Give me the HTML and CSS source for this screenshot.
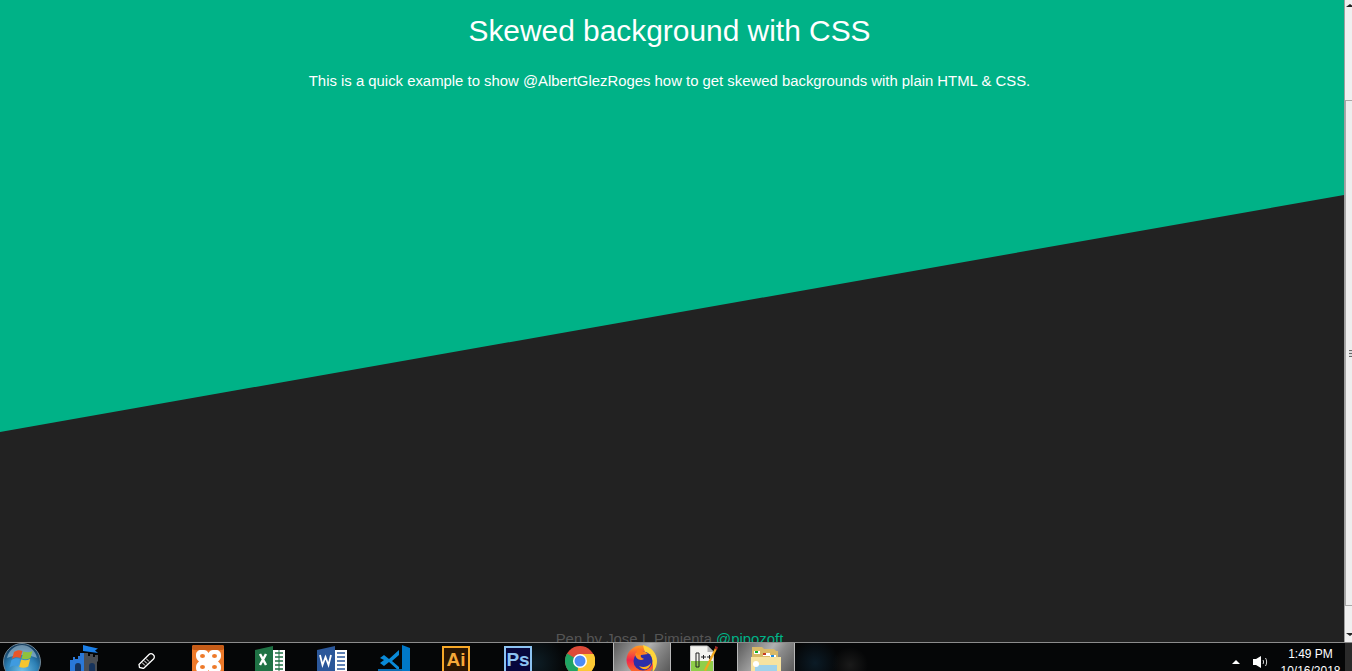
FILE: index.html
```html
<!DOCTYPE html>
<html>
<head>
    <link rel="stylesheet" href="styles.css">
</head>
<body>
    <div class="browser">
        <div class="page">
            <div class="skew"></div>
            <div class="intro">
                <h1>Skewed background with CSS</h1>
                <p>This is a quick example to show @AlbertGlezRoges how to get skewed backgrounds with plain HTML &amp; CSS.</p>
            </div>
            <div class="credit">Pen by Jose I. Pimienta <a href="#">@pipozoft</a></div>
        </div>
        <div class="scrollbar">
            <div class="arrow-up"></div>
            <div class="thumb"><span class="grip"></span></div>
            <div class="arrow-down"></div>
        </div>
    </div>
    <div class="taskbar">
        <div class="start">
            <svg width="38" height="38" viewBox="0 0 38 38">
                <defs>
                    <radialGradient id="orb" cx="50%" cy="75%" r="70%">
                        <stop offset="0" stop-color="#6fc0e8"/>
                        <stop offset="0.6" stop-color="#2c7fb4"/>
                        <stop offset="1" stop-color="#123a5c"/>
                    </radialGradient>
                </defs>
                <circle cx="19" cy="19" r="18.500" fill="url(#orb)" stroke="#6f8696"/>
                <path d="M4 15C6 6 13 2 19 2s13 4 15 13c-9-4-21-4-30 0z" fill="#b4d4e6" opacity="0.55"/>
                <path d="M11 9c3-2 6-2 8.500-1L17.500 15c-3-1-6-1-8.500 1z" fill="#e8562a"/>
                <path d="M20.500 8.500c3 1 6 1 9-0.500l-2 7c-3 1.500-6 1.500-9 0.500z" fill="#8fc23c"/>
                <path d="M8.500 17c3-2 6-2 8.500-1l-2 7.500c-3-1-6-1-8.500 1z" fill="#3f9be0"/>
                <path d="M18.200 16.500c3 1 6 1 9-0.500l-2 7.500c-3 1.500-6 1.500-9 0.500z" fill="#f7c52e"/>
            </svg>
        </div>
        <div class="task">
            <svg width="30" height="26" viewBox="0 0 30 26">
                <path d="M14 0l6 1.500 9 2-3 2 3 2.500-15-2z" fill="#1b7fe8"/>
                <path d="M15 26V8h4v3h2V9h3v3h2v-2h3v6l-1 1v11z" fill="#4b4f55"/>
                <path d="M15 26V8h-4v3H9v3H6v-2H4v3H1v3l0 8z" fill="#2a78d8"/>
                <path d="M6 26v-5a3 3 0 0 1 6 0v5zM20 26v-5a3 3 0 0 1 6 0v5z" fill="#16335c"/>
            </svg>
        </div>
        <div class="task">
            <svg class="pen" width="18" height="19" viewBox="0 0 18 19">
                <path d="M1.500 17.500l-.5-3L11 4.500a2.800 2.800 0 0 1 4 0l.5.5a2.800 2.800 0 0 1 0 4l-10 9.500z" fill="#0a0a0a" stroke="#ffffff" stroke-width="1.300"/>
                <path d="M4 12.500l3 3M6 10.500l3 3M8 8.500l3 3" stroke="#ffffff"/>
            </svg>
        </div>
        <div class="task">
            <svg width="32" height="28" viewBox="0 0 32 28">
                <rect width="32" height="28" rx="2" fill="#ee7a2a"/>
                <rect width="32" height="5" rx="2" fill="#c65c18"/>
                <path fill="#ffffff" d="M9 5h3c2 0 3.500 1 4.500 3 1-2 2.500-3 4.500-3h3c3 0 5 2 5 5v1c0 2-1 4-3 5.500 2 1.500 3 3.500 3 5.500v1c0 3-2 5-5 5h-3c-2 0-3.500-1-4.500-3-1 2-2.500 3-4.500 3H9c-3 0-5-2-5-5v-1c0-2 1-4 3-5.500C5 15 4 13 4 11v-1c0-3 2-5 5-5z"/>
                <ellipse cx="10.500" cy="11" rx="2.500" ry="2" fill="#ee7a2a"/>
                <ellipse cx="22.500" cy="11" rx="2.500" ry="2" fill="#ee7a2a"/>
                <ellipse cx="10.500" cy="22" rx="2.500" ry="2" fill="#ee7a2a"/>
                <ellipse cx="22.500" cy="22" rx="2.500" ry="2" fill="#ee7a2a"/>
            </svg>
        </div>
        <div class="task">
            <svg class="low" width="30" height="26" viewBox="0 0 30 26">
                <path d="M0 4l18-4v26H0z" fill="#1f7245"/>
                <rect x="18" y="4" width="12" height="22" fill="#ffffff"/>
                <path d="M20 7h8M20 11h8M20 15h8M20 19h8M20 23h8" stroke="#1f7245" stroke-width="1.500"/>
                <path d="M24 4v22" stroke="#1f7245"/>
                <path d="M5 8l6 11M11 8l-6 11" stroke="#ffffff" stroke-width="2.500"/>
            </svg>
        </div>
        <div class="task">
            <svg class="low" width="30" height="26" viewBox="0 0 30 26">
                <path d="M0 4l18-4v26H0z" fill="#2b579a"/>
                <rect x="18" y="4" width="12" height="22" fill="#ffffff"/>
                <path d="M20 7h8M20 11h8M20 15h8M20 19h8M20 23h8" stroke="#2b579a" stroke-width="1.500"/>
                <path d="M3 9l2.500 10L8.500 11l3 8L14 9" fill="none" stroke="#ffffff" stroke-width="1.800"/>
            </svg>
        </div>
        <div class="task">
            <svg width="32" height="26" viewBox="0 0 32 26">
                <path d="M24 0l8 3v23h-8z" fill="#0078c8"/>
                <path d="M2 13l4-3 5 4 10-9v5l-7 6 7 6v4l-10-9-5 4-4-3 4-3z" fill="#0a8ad8"/>
                <path d="M0 24h24v2H0z" fill="#0a6cb0"/>
            </svg>
        </div>
        <div class="task">
            <div class="badge ai low">Ai</div>
        </div>
        <div class="task">
            <div class="badge ps low">Ps</div>
        </div>
        <div class="task">
            <svg class="low" width="30" height="30" viewBox="0 0 30 30">
                <circle cx="15" cy="15" r="15" fill="#dd4b39"/>
                <path d="M15 15L2 7.500A15 15 0 0 0 12 29.700z" fill="#1fa463"/>
                <path d="M15 8h13.500A15 15 0 0 1 12 29.700z" fill="#fcc934"/>
                <circle cx="15" cy="15" r="7" fill="#ffffff"/>
                <circle cx="15" cy="15" r="5.500" fill="#4c8bf5"/>
            </svg>
        </div>
        <div class="task">
            <div class="active">
                <svg width="32" height="30" viewBox="0 0 32 30">
                    <defs>
                        <linearGradient id="fox" x1="0" y1="0" x2="0" y2="1">
                            <stop offset="0" stop-color="#ff9a1e"/>
                            <stop offset="0.5" stop-color="#f0244e"/>
                            <stop offset="1" stop-color="#ff7a1e"/>
                        </linearGradient>
                    </defs>
                    <circle cx="15" cy="15" r="14.500" fill="url(#fox)"/>
                    <path d="M17 0c8 2 14 8 14 16 0 5-2 9-5 12 2-6 1-12-3-16-3-3-5-6-6-12z" fill="#ffd43a"/>
                    <circle cx="17" cy="16" r="9.500" fill="#2c2ea8"/>
                    <path d="M9 9c3-3 9-4 13 0l-7 1c-1 2 1 3 3 4-3 2-8 1-9-5z" fill="#ff8a1e"/>
                    <path d="M12 3c3 1 5 3 6 6l-7 1c-1-2 0-5 1-7z" fill="#ff7a1e"/>
                    <path d="M13 21c4 2 9 1 12-3-1 6-7 9-12 3z" fill="#ffb01e"/>
                </svg>
            </div>
        </div>
        <div class="task">
            <svg width="28" height="26" viewBox="0 0 28 26">
                <path d="M.5 1h17l6 6v19H.5z" fill="#f4f4f0" stroke="#c8c8c8"/>
                <path d="M17.500 1v6h6z" fill="#b0b0b0"/>
                <path d="M1 16h22v10H1z" fill="#8fce4a"/>
                <path d="M6 8v14h3V8z" fill="none" stroke="#222222"/>
                <path d="M11 12h5M13.500 10v4M17 12h5M19.500 10v4" stroke="#222222"/>
                <path d="M27 4L16 26l-2-1L25 3z" fill="#f0a81e"/>
                <path d="M25 1l3 1-1 3-2-1z" fill="#a02a28"/>
            </svg>
        </div>
        <div class="task">
            <div class="active">
                <svg width="32" height="28" viewBox="0 0 32 28">
                    <path d="M2 4V2h10l2 2h10l2 2h2v22H2z" fill="#d9b968"/>
                    <rect x="4" y="6" width="6" height="3" fill="#ffffff"/>
                    <rect x="5" y="6" width="3" height="2" fill="#12b02c"/>
                    <rect x="13" y="8" width="7" height="3" fill="#ffffff"/>
                    <rect x="13" y="8" width="3" height="2" fill="#c83a20"/>
                    <rect x="20" y="10" width="6" height="3" fill="#ffffff"/>
                    <rect x="21" y="10" width="3" height="2" fill="#1e8ae0"/>
                    <rect x="1" y="12" width="30" height="16" fill="#f7e3a0"/>
                    <rect x="5" y="20" width="22" height="8" fill="#9fd2ea"/>
                    <circle cx="6" cy="19" r="3" fill="#ffffff"/>
                </svg>
            </div>
        </div>
        <div class="tray">
            <div class="tray-up"></div>
            <svg class="speaker" width="15" height="12" viewBox="0 0 15 12">
                <path d="M0 3h3l5-3v12l-5-3H0z" fill="#ffffff"/>
                <path d="M10 4c.7 1 .7 3 0 4M12.500 2c1.500 2 1.500 6 0 8" fill="none" stroke="#d8d8d8"/>
            </svg>
            <div class="clock">
                <div>1:49 PM</div>
                <div>10/16/2018</div>
            </div>
            <div class="show-desktop"></div>
        </div>
    </div>
</body>
</html>
```

FILE: styles.css
```css
html, body { height: 100%; margin: 0; overflow: hidden; }
body { display: flex; flex-direction: column; background-color: #050607; font-family: "Liberation Sans", Arial, sans-serif; }

.browser { display: flex; height: 642px; flex: none; }
.page { position: relative; flex: 1; display: flex; flex-direction: column; justify-content: space-between; background-color: #222222; color: #ffffff; overflow: hidden; padding-right: 5px; }
.skew { position: absolute; top: 0; right: 0; bottom: 0; left: 0; background-color: #00b287; clip-path: polygon(0 0, 100% 0, 100% 195px, 0 432px); }

.intro { position: relative; text-align: center; padding-top: 13px; }
h1 { margin: 0; font-size: 29.9px; font-weight: 400; line-height: 36px; }
p { margin: 22px 0 0; font-size: 14.88px; line-height: 20px; color: #ffffff; }

.credit { position: relative; height: 12px; line-height: 18px; text-align: center; font-size: 14.88px; color: #555555; overflow: hidden; }
.credit a { color: #00b287; text-decoration: none; }

.scrollbar { width: 7px; flex: none; display: flex; flex-direction: column; background-color: #f0f0f0; border-left: 1px solid #a0a0a0; overflow: hidden; }
.arrow-up, .arrow-down { display: flex; justify-content: flex-end; }
.arrow-up { height: 100px; padding-top: 4px; box-sizing: border-box; }
.arrow-down { flex: 1; padding-top: 27px; box-sizing: border-box; }
.arrow-up::before, .arrow-down::before { content: ""; width: 0; height: 0; margin-right: -2px; border-left: 4px solid transparent; border-right: 4px solid transparent; }
.arrow-up::before { border-bottom: 3px solid #222222; }
.arrow-down::before { border-top: 3px solid #222222; }
.thumb { height: 506px; flex: none; display: flex; align-items: center; justify-content: flex-end; background-color: #eeeeee; border: 1px solid #a8a8a8; border-right: none; box-sizing: border-box; }
.grip { width: 3px; height: 7px; background: repeating-linear-gradient(#666666 0, #666666 1px, #dddddd 1px, #dddddd 3px); }

.taskbar { height: 29px; flex: none; display: flex; border-top: 1px solid #8c8c8c; box-sizing: border-box; overflow: hidden; background: radial-gradient(circle at 535px 20px, #0e1e26, transparent 30px), radial-gradient(circle at 815px 20px, #0b1b26, transparent 24px), radial-gradient(circle at 850px 22px, #1a1a1a, transparent 18px), #050607; }
.start { width: 53px; flex: none; padding-left: 3px; box-sizing: border-box; }
.start svg { display: block; }
.task { width: 62px; flex: none; display: flex; justify-content: center; align-items: flex-start; padding-top: 2px; box-sizing: border-box; }
.task svg { flex: none; }
.task .low { margin-top: 1px; }
.task .pen { margin-top: 5px; margin-left: 1px; }
.active { width: 58px; height: 40px; margin-top: -3px; display: flex; justify-content: center; padding-top: 2px; box-sizing: border-box; border: 1px solid #b8b8b8; border-bottom: none; background: linear-gradient(125deg, #5a5a5a, #b0b0b0 45%, #8a8a8a 60%, #4a4a4a); }

.badge { width: 28px; height: 28px; box-sizing: border-box; border: 2px solid; font-size: 19px; font-weight: 700; line-height: 23px; text-align: center; flex: none; }
.ai { border-color: #f7a828; background-color: #2a1502; color: #f7a838; }
.ps { border-color: #8cc3f2; background-color: #07073c; color: #8cc3f2; }

.tray { flex: 1; display: flex; justify-content: flex-end; align-items: flex-start; color: #ffffff; font-size: 12px; }
.tray-up { width: 0; height: 0; margin: 17px 13px 0 0; border-left: 4px solid transparent; border-right: 4px solid transparent; border-bottom: 4px solid #ffffff; }
.speaker { margin-top: 13px; }
.clock { width: 67px; margin-left: 9px; padding-top: 3px; text-align: center; line-height: 17px; }
.show-desktop { width: 7px; height: 28px; margin-left: 1px; background-color: #2a2a2a; }
```
